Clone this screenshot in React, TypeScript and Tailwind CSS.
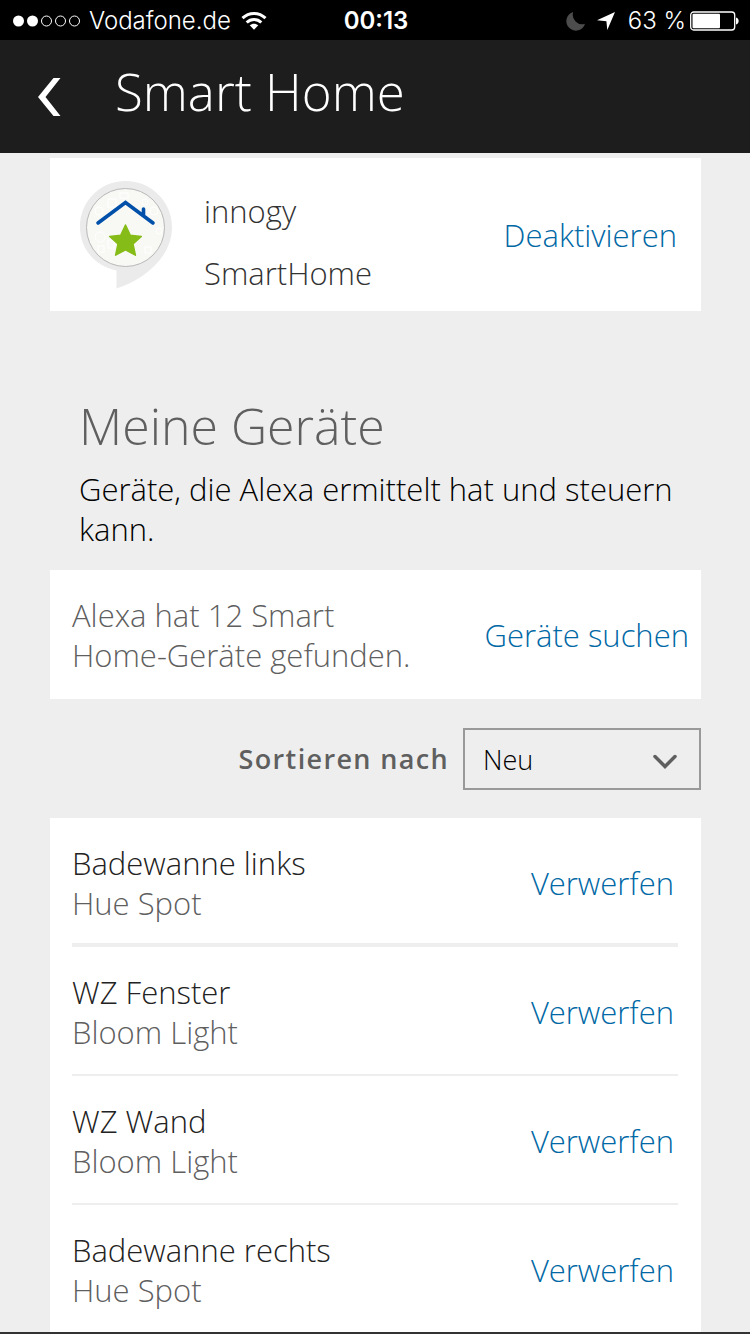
import { useState } from "react";

const devices = [
  { name: "Badewanne links", type: "Hue Spot" },
  { name: "WZ Fenster", type: "Bloom Light" },
  { name: "WZ Wand", type: "Bloom Light" },
  { name: "Badewanne rechts", type: "Hue Spot" },
];

function StatusBar() {
  return (
    <div className="grid h-10 grid-cols-[1fr_auto_1fr] items-center bg-black pt-px pr-[11px] pl-[13px] font-['Inter',sans-serif] text-2xl leading-none text-white">
      <div className="flex items-center gap-2">
        <svg width="68" height="14" viewBox="0 0 68 14" aria-hidden="true">
          <circle cx="5.5" cy="7" r="5.5" fill="#fff" />
          <circle cx="19.5" cy="7" r="5.5" fill="#fff" />
          <g fill="none" stroke="#fff">
            <circle cx="33.5" cy="7" r="5" />
            <circle cx="47.5" cy="7" r="5" />
            <circle cx="61.5" cy="7" r="5" />
          </g>
        </svg>
        <span>Vodafone.de</span>
        <svg className="ml-0.5" width="26" height="20" viewBox="0 0 26 20" aria-hidden="true">
          <g fill="none" stroke="#fff" strokeWidth="3">
            <path d="M1.500 7.200C8 .9 18 .9 24.500 7.200" />
            <path d="M5.700 11.500C9.800 7.600 16.200 7.600 20.300 11.500" />
          </g>
          <path d="M8.700 14.300c2.500-2.200 6.100-2.200 8.600 0L13 18.700z" fill="#fff" />
        </svg>
      </div>
      <span className="font-semibold">00:13</span>
      <div className="flex items-center justify-end">
        <svg width="20" height="20" viewBox="0 0 20 20" aria-hidden="true">
          <path d="M7.200 1A9.500 9.500 0 1 0 19 12.700 9.400 9.400 0 0 1 7.200 1z" fill="#4d4d4d" />
        </svg>
        <svg className="ml-[10px]" width="20" height="20" viewBox="0 0 20 20" aria-hidden="true">
          <path d="M19 1 1 9.200l9.400 1L11.300 19z" fill="#fff" />
        </svg>
        <span className="ml-3">63 %</span>
        <svg className="ml-1" width="49" height="20" viewBox="0 0 49 20" aria-hidden="true">
          <rect x="0.700" y="1" width="44" height="18" rx="3" fill="none" stroke="#fff" strokeWidth="1.300" />
          <rect x="2.500" y="2.800" width="27.500" height="14.400" rx="1" fill="#fff" />
          <path d="M46 6.500c3.500.5 3.500 6.500 0 7z" fill="#fff" />
        </svg>
      </div>
    </div>
  );
}

function SkillLogo() {
  return (
    <svg width="94" height="110" viewBox="0 0 94 110" role="img" aria-label="innogy SmartHome">
      <path
        d="M46.500 1C21 1 1 21.500 1 47c0 21 14.500 39 36.500 43.500v18C61 101 93 80 93 47 93 21.500 72 1 46.500 1z"
        fill="#ebebeb"
      />
      <circle cx="46.500" cy="47.500" r="39" fill="#f8f8f5" stroke="#b8b8b8" />
      <g fill="none" stroke="#fff" strokeWidth="1">
        <rect x="29" y="19" width="8" height="8" />
        <rect x="41" y="13" width="8" height="5" />
        <circle cx="20" cy="31" r="4" />
        <circle cx="21" cy="57" r="5" />
        <rect x="19" y="66" width="6" height="6" />
        <circle cx="75" cy="31" r="4" />
        <rect x="66" y="67" width="6" height="6" />
        <circle cx="80" cy="51" r="3" />
        <rect x="29" y="60" width="6" height="8" />
        <circle cx="66" cy="22" r="3" />
      </g>
      <path
        d="M19 43 46.500 22.500 74 43M64.500 35.500V29"
        fill="none"
        stroke="#0050aa"
        strokeWidth="3.600"
        strokeLinecap="round"
        strokeLinejoin="miter"
      />
      <path
        d="m46.500 45 4.800 10.200 11 1.200-8.300 7.600 2.400 11.200-9.900-5.300-9.900 5.300 2.400-11.200-8.300-7.600 11-1.200z"
        fill="#86bc17"
        stroke="#86bc17"
        strokeWidth="1.500"
        strokeLinejoin="round"
      />
    </svg>
  );
}

export default function App() {
  const [sort, setSort] = useState("Neu");

  return (
    <div className="flex min-h-screen flex-col bg-[#eeeeee] font-['Open_Sans','Noto_Sans',sans-serif] text-[31px] leading-10 font-light text-black">
      <StatusBar />
      <header className="flex h-[113px] items-center bg-[#1d1d1d] px-9 pb-3 text-white">
        <button type="button" aria-label="Zurück" className="mt-3">
          <svg width="28" height="40" viewBox="0 0 28 40" aria-hidden="true">
            <path d="M17.500 1H24.500L9.500 20 24.500 39H17.500L2 20z" fill="#fff" />
          </svg>
        </button>
        <h1 className="ml-[51px] text-[51px] leading-[64px]">Smart Home</h1>
      </header>

      <main className="flex-1 pt-[5px] pr-[49px] pl-[50px]">
        <section className="flex items-center bg-white py-[7px] pr-6 pl-[29px] text-[#333333]">
          <SkillLogo />
          <p className="ml-[31px] w-[190px] pt-[15px] leading-[62px]">innogy SmartHome</p>
          <button type="button" className="ml-auto text-[#0068a5]">
            Deaktivieren
          </button>
        </section>

        <section className="pt-[83px] pb-[21px] pl-[29px]">
          <h2 className="text-[50px] leading-[64px] text-[#5f5f5f]">Meine Geräte</h2>
          <p className="mt-[11px]">Geräte, die Alexa ermittelt hat und steuern kann.</p>
        </section>

        <section className="flex items-center justify-between bg-white pt-[25px] pb-6 pr-3 pl-[22px]">
          <p className="w-[360px] text-[#5f5f5f]">Alexa hat 12 Smart Home-Geräte gefunden.</p>
          <button type="button" className="text-[#0068a5]">
            Geräte suchen
          </button>
        </section>

        <div className="flex items-center justify-end gap-[14px] pt-[29px] pb-7">
          <label htmlFor="sort" className="text-[27px] font-semibold tracking-wider text-[#5f5f5f]">
            Sortieren nach
          </label>
          <div className="relative w-[238px]">
            <select
              id="sort"
              value={sort}
              onChange={(e) => setSort(e.target.value)}
              className="block h-[62px] w-full appearance-none border-2 border-[#999999] bg-transparent pt-0.5 pl-[18px] text-[27px]"
            >
              <option>Neu</option>
              <option>Name</option>
            </select>
            <svg
              className="pointer-events-none absolute top-[26px] right-6"
              width="24"
              height="16"
              viewBox="0 0 24 16"
              aria-hidden="true"
            >
              <path d="M2 2.500 12 12.500 22 2.500" fill="none" stroke="#5f5f5f" strokeWidth="3.500" strokeLinecap="round" />
            </svg>
          </div>
        </div>

        <ul className="bg-white pr-[23px] pl-[22px]">
          {devices.map((device) => (
            <li
              key={device.name}
              className="flex items-center justify-between border-b-2 border-[#eeeeee] pt-[25px] pr-1 pb-[22px] first:border-b-4 first:pb-5 last:border-b-0"
            >
              <div>
                <p className="text-[#222222]">{device.name}</p>
                <p className="text-[#5f5f5f]">{device.type}</p>
              </div>
              <button type="button" className="text-[#0068a5]">
                Verwerfen
              </button>
            </li>
          ))}
        </ul>
      </main>
      <footer className="h-0.5 bg-[#333333]" />
    </div>
  );
}
